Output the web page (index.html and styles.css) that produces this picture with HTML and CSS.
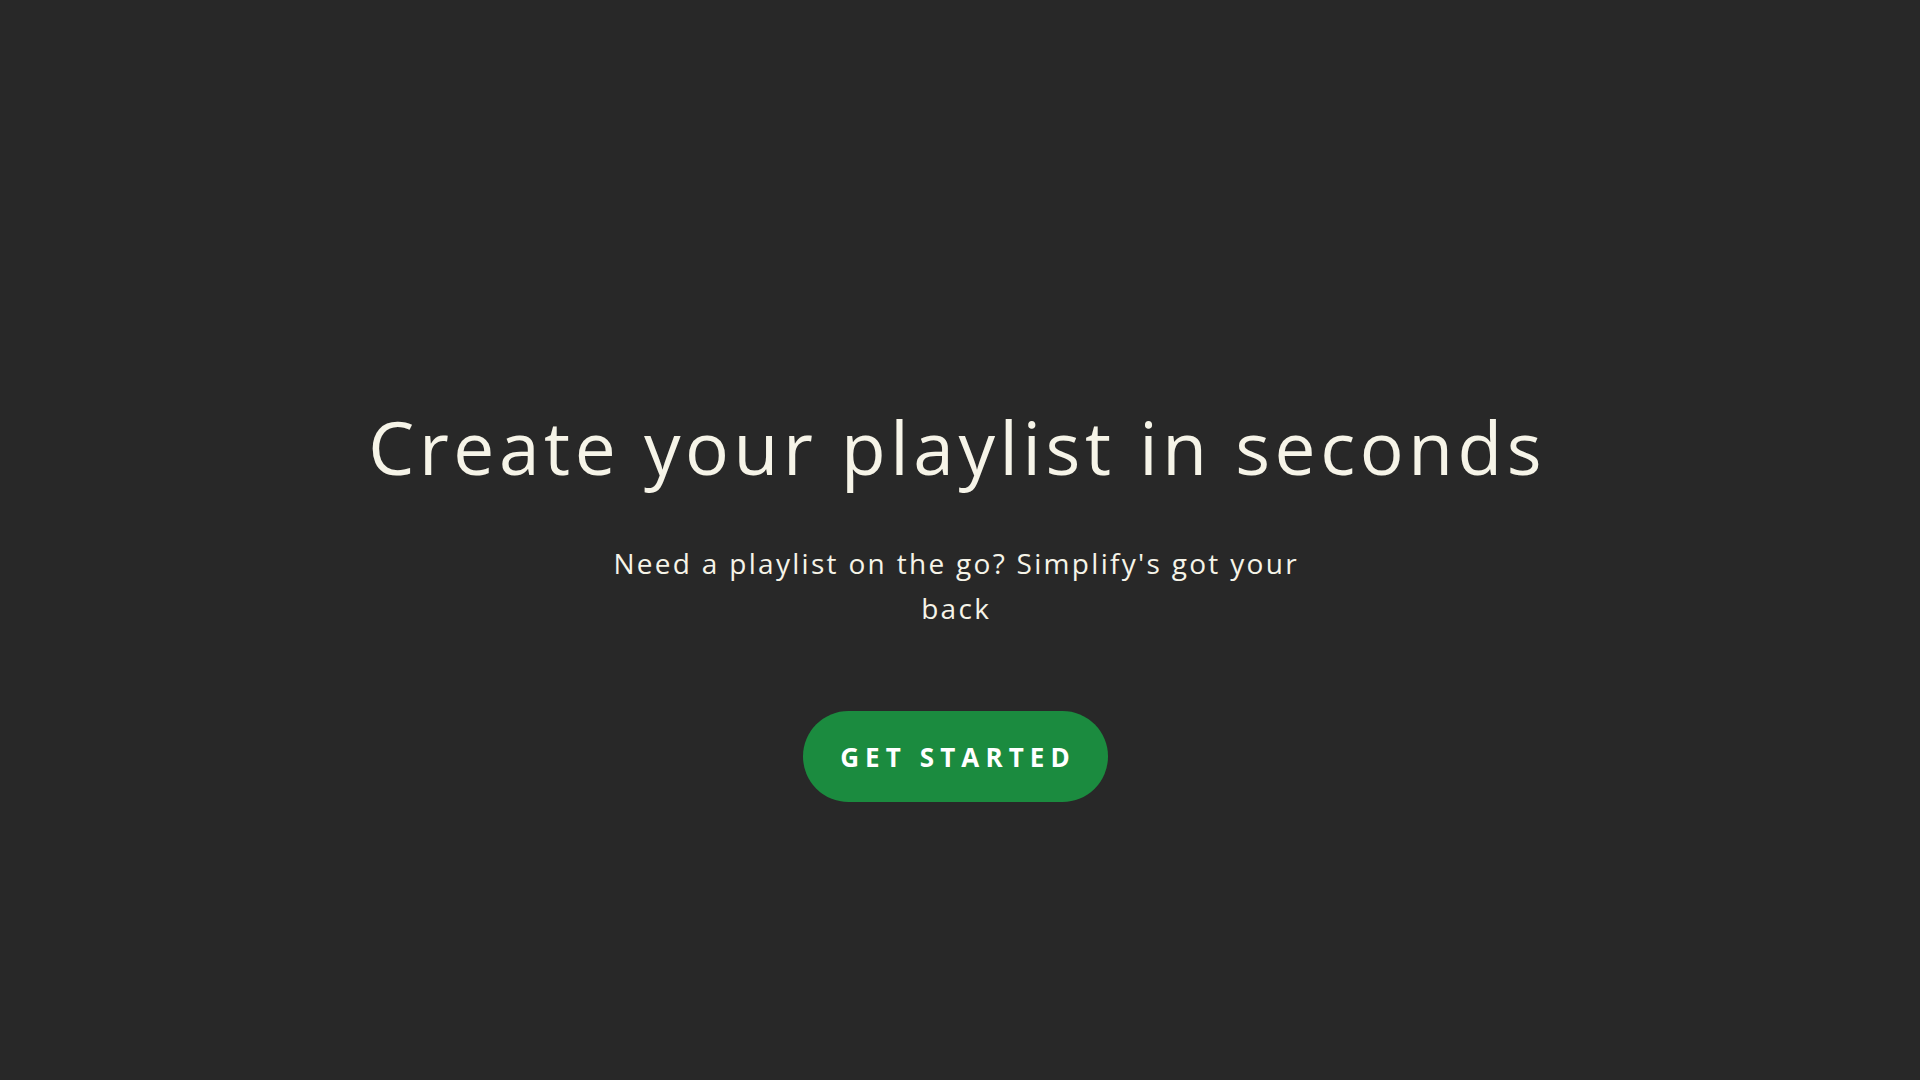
FILE: index.html
```html
<!DOCTYPE html>
<html lang="en">
<head>
<meta charset="utf-8">
<title>Simplify</title>
<link rel="stylesheet" href="styles.css">
</head>
<body>
<main class="hero">
  <h1 class="hero-title">Create your playlist in seconds</h1>
  <p class="hero-sub">Need a playlist on the go? Simplify's got your back</p>
  <a class="cta" href="#">GET STARTED</a>
</main>
</body>
</html>
```
FILE: styles.css
```css
html, body {
  margin: 0;
  padding: 0;
}
body {
  background: #282828;
  color: #f6f4e8;
  font-family: "Open Sans", "DejaVu Sans", sans-serif;
}
.hero {
  box-sizing: border-box;
  min-height: 100vh;
  padding-top: 125px;
  padding-right: 10px;
  display: flex;
  flex-direction: column;
  align-items: center;
  justify-content: center;
  text-align: center;
}
.hero-title {
  margin: 0;
  padding-left: 4.6px;
  font-size: 73px;
  font-weight: 400;
  line-height: 88px;
  letter-spacing: 4.6px;
}
.hero-sub {
  margin: 50px 0 0;
  max-width: 720px;
  padding-left: 2.3px;
  font-size: 28px;
  line-height: 45px;
  font-weight: 400;
  letter-spacing: 2.3px;
}
.cta {
  margin-top: 80px;
  box-sizing: border-box;
  width: 305px;
  height: 91px;
  padding-left: 6px;
  border-radius: 46px;
  background: #1b8b3f;
  color: #ffffff;
  text-decoration: none;
  display: flex;
  align-items: center;
  justify-content: center;
  font-size: 26px;
  font-weight: 700;
  letter-spacing: 6.1px;
}
```
